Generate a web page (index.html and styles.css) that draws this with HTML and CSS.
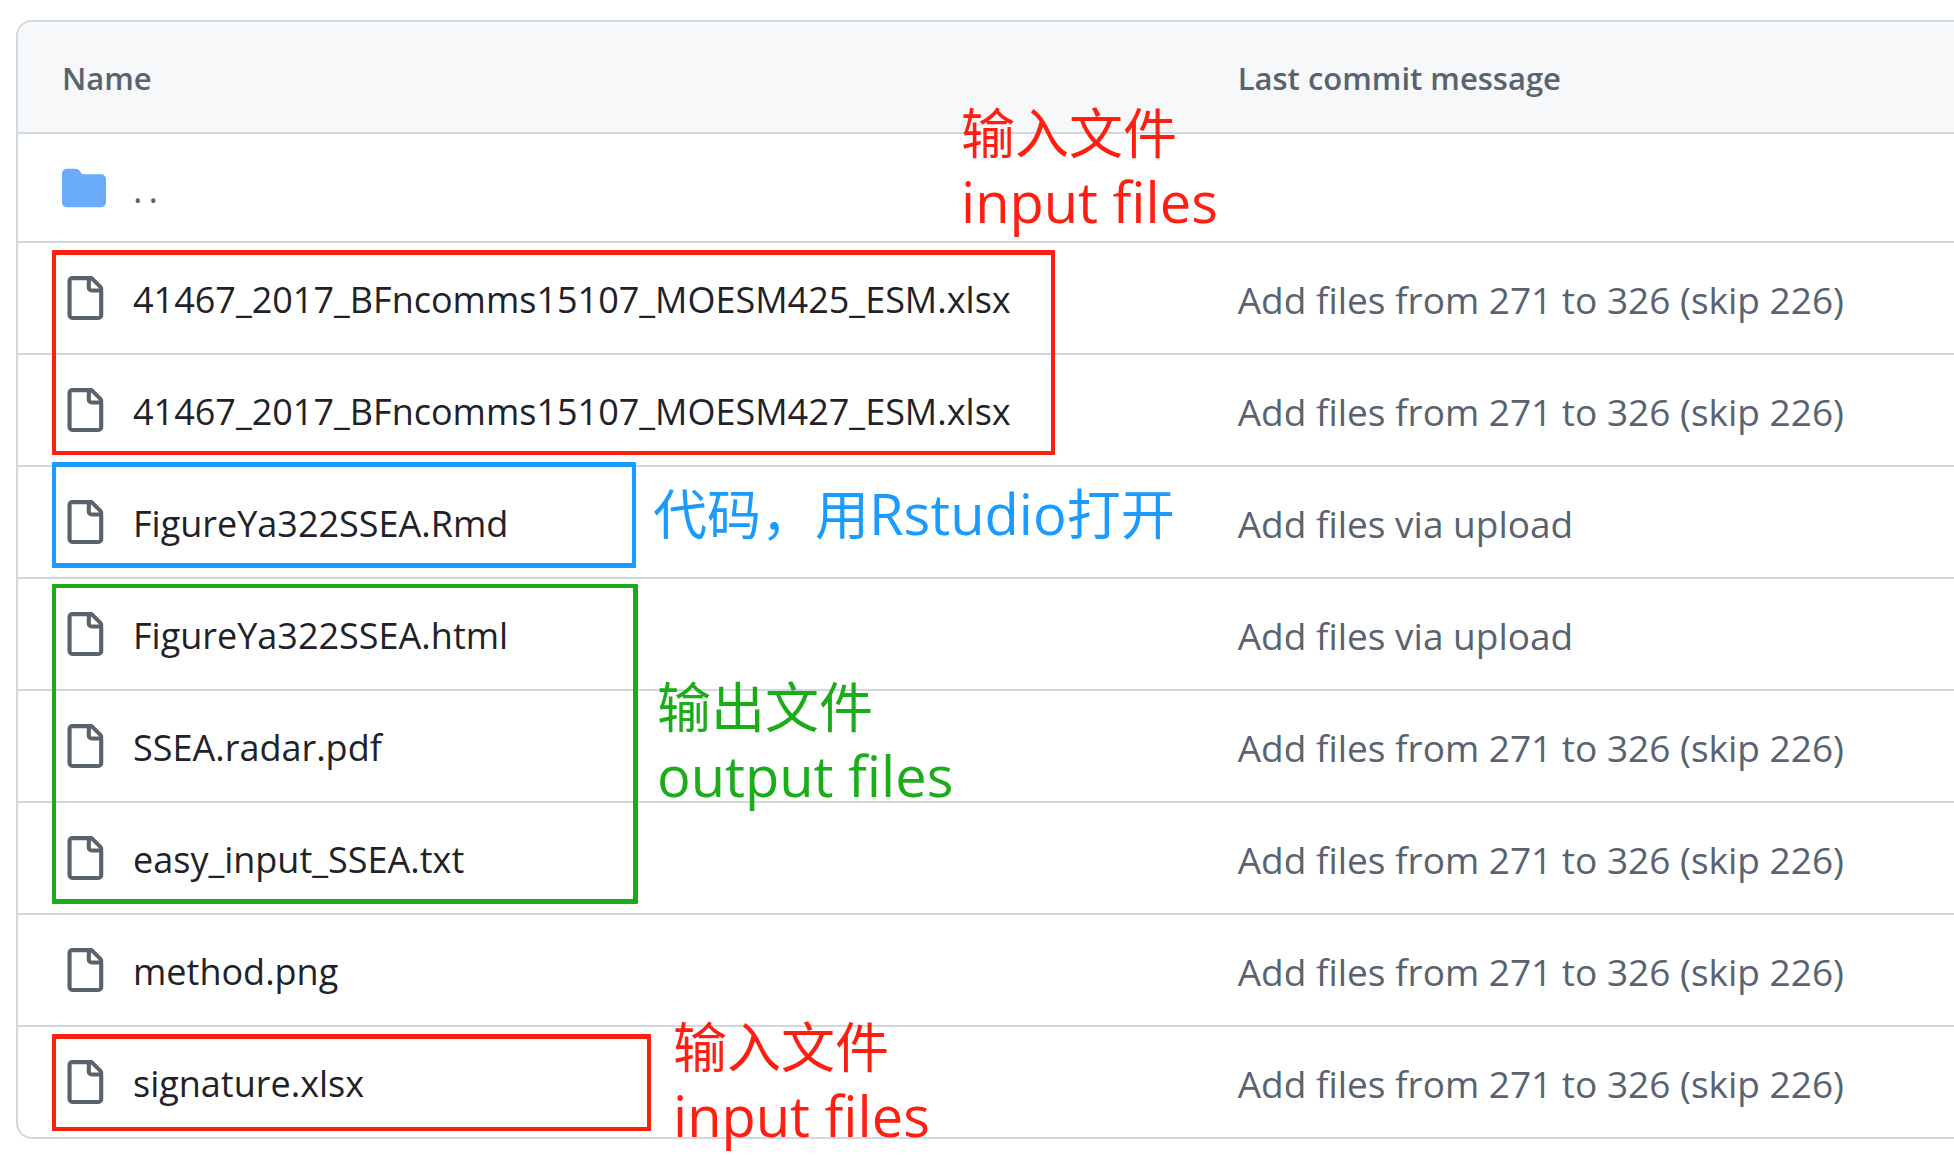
FILE: index.html
```html
<!DOCTYPE html>
<html lang="en">
<head>
<meta charset="utf-8">
<title>FigureYa322SSEA files</title>
<link rel="stylesheet" href="styles.css">
</head>
<body>
<svg class="sprite" aria-hidden="true">
  <symbol id="file" viewBox="0 0 16 16"><path d="M2 1.75C2 .784 2.784 0 3.75 0h6.586c.464 0 .909.184 1.237.513l2.914 2.914c.329.328.513.773.513 1.237v9.586A1.75 1.75 0 0 1 13.25 16h-9.5A1.75 1.75 0 0 1 2 14.25Zm1.75-.25a.25.25 0 0 0-.25.25v12.5c0 .138.112.25.25.25h9.5a.25.25 0 0 0 .25-.25V6h-2.75A1.75 1.75 0 0 1 9 4.25V1.5Zm6.75.062V4.25c0 .138.112.25.25.25h2.688l-.011-.013-2.914-2.914-.013-.011Z"/></symbol>
  <symbol id="folder" viewBox="0 0 16 16"><path d="M1.75 1A1.75 1.75 0 0 0 0 2.75v10.5C0 14.216.784 15 1.75 15h12.5A1.75 1.75 0 0 0 16 13.250v-8.5A1.75 1.75 0 0 0 14.250 3H7.500a.25.25 0 0 1-.2-.1l-.9-1.200C6.070 1.260 5.550 1 5 1H1.750Z"/></symbol>
</svg>
<main class="page">
  <div class="listing">
    <table class="files">
      <thead>
        <tr><th class="name-col" scope="col">Name</th><th scope="col">Last commit message</th></tr>
      </thead>
      <tbody>
        <tr class="parent"><td><div class="entry"><svg class="icon folder"><use href="#folder"/></svg><a class="up" href="#" aria-label="Parent directory">..</a></div></td><td></td></tr>
        <tr><td><div class="entry"><svg class="icon"><use href="#file"/></svg><a href="#">41467_2017_BFncomms15107_MOESM425_ESM.xlsx</a></div></td><td><a class="message" href="#">Add files from 271 to 326 (skip 226)</a></td></tr>
        <tr><td><div class="entry"><svg class="icon"><use href="#file"/></svg><a href="#">41467_2017_BFncomms15107_MOESM427_ESM.xlsx</a></div></td><td><a class="message" href="#">Add files from 271 to 326 (skip 226)</a></td></tr>
        <tr><td><div class="entry"><svg class="icon"><use href="#file"/></svg><a href="#">FigureYa322SSEA.Rmd</a></div></td><td><a class="message" href="#">Add files via upload</a></td></tr>
        <tr><td><div class="entry"><svg class="icon"><use href="#file"/></svg><a href="#">FigureYa322SSEA.html</a></div></td><td><a class="message" href="#">Add files via upload</a></td></tr>
        <tr><td><div class="entry"><svg class="icon"><use href="#file"/></svg><a href="#">SSEA.radar.pdf</a></div></td><td><a class="message" href="#">Add files from 271 to 326 (skip 226)</a></td></tr>
        <tr><td><div class="entry"><svg class="icon"><use href="#file"/></svg><a href="#">easy_input_SSEA.txt</a></div></td><td><a class="message" href="#">Add files from 271 to 326 (skip 226)</a></td></tr>
        <tr><td><div class="entry"><svg class="icon"><use href="#file"/></svg><a href="#">method.png</a></div></td><td><a class="message" href="#">Add files from 271 to 326 (skip 226)</a></td></tr>
        <tr><td><div class="entry"><svg class="icon"><use href="#file"/></svg><a href="#">signature.xlsx</a></div></td><td><a class="message" href="#">Add files from 271 to 326 (skip 226)</a></td></tr>
      </tbody>
    </table>
  </div>

  <div class="frame red frame-data"></div>
  <div class="frame blue frame-code"></div>
  <div class="frame green frame-output"></div>
  <div class="frame red frame-signature"></div>

  <div class="note red note-data"><p class="zh" lang="zh-CN">输入文件</p><p>input files</p></div>
  <div class="note blue note-code"><p class="zh" lang="zh-CN">代码，用<span class="latin">Rstudio</span>打开</p></div>
  <div class="note green note-output"><p class="zh" lang="zh-CN">输出文件</p><p>output files</p></div>
  <div class="note red note-signature"><p class="zh" lang="zh-CN">输入文件</p><p>input files</p></div>
</main>
</body>
</html>
```
FILE: styles.css
```css
* { box-sizing: border-box; }

body {
  margin: 0;
  background: #fff;
  color: #1f2328;
  font-family: "Open Sans", "Noto Sans CJK SC", sans-serif;
  font-size: 36px;
  line-height: 48px;
}

.sprite { position: absolute; width: 0; height: 0; }

.page {
  position: relative;
  padding: 20px 0 16px 16px;
  overflow: hidden;
}

.listing {
  border: 2px solid #d1d9e0;
  border-right: 0;
  border-radius: 16px 0 0 16px;
  overflow: hidden;
}

.files {
  width: 100%;
  table-layout: fixed;
  border-collapse: separate;
  border-spacing: 0;
}

.files th {
  height: 112px;
  padding: 2px 0 0;
  background: #f6f8fa;
  color: #59636e;
  font-size: 31px;
  font-weight: 600;
  text-align: left;
  border-bottom: 2px solid #d1d9e0;
}

.files td {
  height: 112px;
  padding: 0;
  border-bottom: 2px solid #d1d9e0;
}

.files .name-col { width: 63%; }
.files th:first-child, .files td:first-child { padding-left: 44px; }
.files .parent td { height: 109px; }
.files tbody tr:last-child td { height: 110px; border-bottom: 0; }

.files a {
  display: inline-block;
  padding-top: 4px;
  color: inherit;
  text-decoration: none;
  white-space: nowrap;
}

.files .message, .files .up { color: #59636e; }
.files .message { display: block; font-size: 37px; }
.files .up { letter-spacing: 6px; }

.entry {
  display: flex;
  align-items: center;
  gap: 27px;
}

.icon {
  flex: none;
  width: 44px;
  height: 44px;
  fill: #59636e;
}

.icon.folder { fill: #6aabfa; }

.red { color: #ff1e10; }
.blue { color: #1a9bff; }
.green { color: #1aad19; }

/* Hand-drawn markup over the listing */
.frame {
  position: absolute;
  left: 52px;
  border: 4px solid currentColor;
  border-top-width: 5px;
  border-radius: 1px;
  pointer-events: none;
}

.frame-data { top: 250px; width: 1003px; height: 205px; }
.frame-code { top: 462px; width: 584px; height: 106px; border-width: 5px 4px; }
.frame-output { top: 584px; width: 586px; height: 320px; border-width: 4px 5px 5px 4px; }
.frame-signature { top: 1034px; width: 599px; height: 97px; }

.note {
  position: absolute;
  font-size: 56px;
  line-height: 70px;
  white-space: nowrap;
}

.note p { margin: 0; }

.note .zh {
  font-family: "Noto Sans CJK SC", sans-serif;
  font-size: 54px;
}

.note .latin {
  font-family: "Open Sans", sans-serif;
  font-size: 56px;
}

.note-data { left: 961px; top: 96px; }
.note-code { left: 653px; top: 477px; }
.note-output { left: 657px; top: 670px; }
.note-signature { left: 673px; top: 1010px; }
```
